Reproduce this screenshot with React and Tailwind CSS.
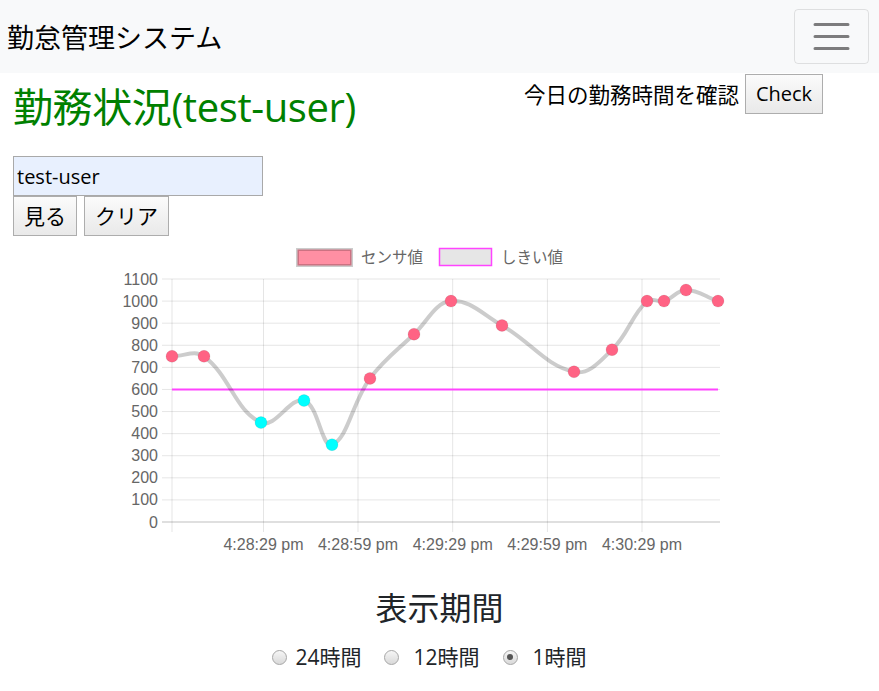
import React from "react";

const FONT = { fontFamily: '"Open Sans", "Noto Sans CJK JP", sans-serif' };
const CJK = { fontFamily: '"Noto Sans CJK JP", "Open Sans", sans-serif' };
const AXIS = { fontFamily: '"Liberation Sans", Arial, sans-serif' };

const points = [
  [172, 750], [204, 750], [261, 450], [304, 550], [332, 350], [370, 650],
  [414, 850], [451, 1000], [502, 890], [574, 680], [612, 780], [647, 1000],
  [664, 1000], [686, 1050], [718, 1000],
];
const Y0 = 522;
const K = 0.2209;
const yOf = (v) => Y0 - v * K;

// chart.js style spline (tension 0.4)
const buildPath = () => {
  const p = points.map(([x, v]) => ({ x, y: yOf(v) }));
  const cps = p.map((cur, i) => {
    const prev = p[i - 1] || cur;
    const next = p[i + 1] || cur;
    const d01 = Math.hypot(cur.x - prev.x, cur.y - prev.y);
    const d12 = Math.hypot(next.x - cur.x, next.y - cur.y);
    let s01 = d01 / (d01 + d12);
    let s12 = d12 / (d01 + d12);
    if (isNaN(s01)) s01 = 0;
    if (isNaN(s12)) s12 = 0;
    const fa = 0.4 * s01;
    const fb = 0.4 * s12;
    return {
      prev: { x: cur.x - fa * (next.x - prev.x), y: cur.y - fa * (next.y - prev.y) },
      next: { x: cur.x + fb * (next.x - prev.x), y: cur.y + fb * (next.y - prev.y) },
    };
  });
  let d = `M${p[0].x},${p[0].y}`;
  for (let i = 1; i < p.length; i++) {
    const a = cps[i - 1].next;
    const b = cps[i].prev;
    d += ` C${a.x},${a.y} ${b.x},${b.y} ${p[i].x},${p[i].y}`;
  }
  return d;
};

const Chart = () => {
  const yTicks = [0, 100, 200, 300, 400, 500, 600, 700, 800, 900, 1000, 1100];
  const xTicks = [
    [263.5, "4:28:29 pm"],
    [358, "4:28:59 pm"],
    [452.7, "4:29:29 pm"],
    [547.4, "4:29:59 pm"],
    [642, "4:30:29 pm"],
  ];
  return (
    <svg width="879" height="320" viewBox="0 240 879 320" className="block mt-[4px]">
      {/* legend */}
      <rect x="297.5" y="249.5" width="54" height="16" fill="#ff8fa3" stroke="rgba(0,0,0,0.2)" strokeWidth="3" />
      <text x="361" y="262.5" fontSize="15.5" fill="#666" style={CJK}>センサ値</text>
      <rect x="439.5" y="248.5" width="52" height="17" fill="#e6e6e6" stroke="#ff44ff" strokeWidth="1.5" />
      <text x="501" y="262.5" fontSize="15.5" fill="#666" style={CJK}>しきい値</text>

      {/* grid */}
      {yTicks.map((v) => (
        <line key={v} x1="162" x2="720" y1={yOf(v)} y2={yOf(v)}
          stroke={v === 0 ? "rgba(0,0,0,0.25)" : "rgba(0,0,0,0.1)"} strokeWidth="1" />
      ))}
      <line x1="172" x2="172" y1={yOf(1100)} y2="532" stroke="rgba(0,0,0,0.1)" />
      {xTicks.map(([x]) => (
        <line key={x} x1={x} x2={x} y1={yOf(1100)} y2="532" stroke="rgba(0,0,0,0.1)" />
      ))}
      {yTicks.map((v) => (
        <text key={v} x="158" y={yOf(v) + 5.5} fontSize="16" fill="#666" textAnchor="end" style={AXIS}>{v}</text>
      ))}
      {xTicks.map(([x, t]) => (
        <text key={t} x={x} y="549.5" fontSize="16" fill="#666" textAnchor="middle" style={AXIS}>{t}</text>
      ))}

      {/* threshold */}
      <line x1="172" x2="718" y1={yOf(600)} y2={yOf(600)} stroke="#ff44ff" strokeWidth="2" />

      {/* data */}
      <path d={buildPath()} fill="none" stroke="rgba(0,0,0,0.2)" strokeWidth="4" />
      {points.map(([x, v], i) => (
        <circle key={i} cx={x} cy={yOf(v)} r="6"
          fill={v < 600 ? "#00ffff" : "#ff6384"} stroke="rgba(0,0,0,0.08)" strokeWidth="1" />
      ))}
    </svg>
  );
};

const btn =
  "h-[40px] border border-[#adadad] bg-gradient-to-b from-[#fbfbfb] to-[#e9e9e9] text-black flex items-center justify-center";

const Radio = ({ checked, label, gap }) => (
  <label className="flex items-center">
    <span className="w-[15px] h-[15px] rounded-full border border-[#a6a6a6] bg-gradient-to-b from-[#f6f6f6] to-[#d9d9d9] flex items-center justify-center">
      {checked && <span className="w-[6px] h-[6px] rounded-full bg-[#555]" />}
    </span>
    <span className={`${gap} text-[21px] leading-[24px] text-[#212529]`}>{label}</span>
  </label>
);

export default function App() {
  return (
    <div className="w-[879px] bg-white text-[#212529]" style={FONT}>
      <nav className="h-[73px] bg-[#f8f9fa] flex items-center justify-between pl-[7px] pr-[10px]">
        <span className="text-[27px] leading-none text-black" style={CJK}>勤怠管理システム</span>
        <button className="w-[75px] h-[55px] rounded-[4px] border border-black/10 flex items-center justify-center">
          <svg width="45" height="45" viewBox="0 0 30 30">
            <path d="M4 7h22M4 15h22M4 23h22" stroke="rgba(0,0,0,0.5)" strokeWidth="2" strokeLinecap="round" />
          </svg>
        </button>
      </nav>

      <div className="h-[83px] flex justify-between pl-[13px] pr-[56px]">
        <h1 className="mt-[8px] text-[40px] leading-[48px] text-[#008000] tracking-[-0.4px]">
          <span style={CJK}>勤務状況</span>(test-user)
        </h1>
        <div className="flex items-start pt-[1px]">
          <span className="text-[21.5px] leading-[40px] text-black" style={CJK}>今日の勤務時間を確認</span>
          <button className={`${btn} ml-[6px] w-[78px] text-[20px]`}>Check</button>
        </div>
      </div>

      <div className="pl-[13px]">
        <input
          className="block w-[250px] h-[40px] border border-[#a9a9a9] bg-[#e8f0fe] pl-[3px] text-[20px] text-black outline-none"
          defaultValue="test-user"
          style={FONT}
        />
        <div className="flex gap-[7px]">
          <button className={`${btn} w-[64px] text-[21px]`} style={CJK}>見る</button>
          <button className={`${btn} w-[85px] text-[21px]`} style={CJK}>クリア</button>
        </div>
      </div>

      <Chart />

      <div className="mt-[26px] h-[40px] flex items-center justify-center">
        <span className="text-[32px] leading-[40px] text-[#212529]" style={CJK}>表示期間</span>
      </div>
      <div className="mt-[19px] h-[24px] flex items-center justify-center pr-[20px]">
        <Radio label="24時間" gap="ml-[8px]" />
        <span className="w-[23px]" />
        <Radio label="12時間" gap="ml-[14px]" />
        <span className="w-[23px]" />
        <Radio label="1時間" checked gap="ml-[15px]" />
      </div>
      <div className="h-[22px]" />
    </div>
  );
}
